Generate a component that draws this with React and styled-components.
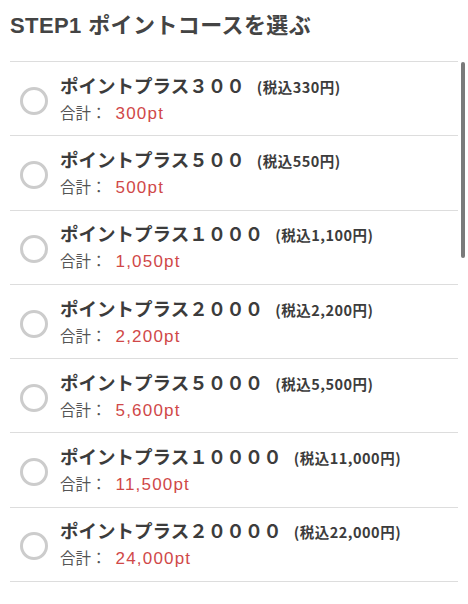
import React from "react";
import styled, { createGlobalStyle } from "styled-components";

const Global = createGlobalStyle`
  html, body { margin: 0; padding: 0; background: #fff; }
  body { font-family: "Liberation Sans", "Noto Sans CJK JP", sans-serif; color: #444; }
`;

const Page = styled.div`
  position: relative;
  width: 468px;
  height: 604px;
  overflow: hidden;
  padding: 0 10px;
  box-sizing: border-box;
`;

const Title = styled.h2`
  margin: 0;
  padding-top: 11px;
  height: 61px;
  box-sizing: border-box;
  font-size: 22px;
  line-height: 30px;
  font-weight: 700;
  color: #444;
  letter-spacing: 0.4px;
`;

const List = styled.ul`
  list-style: none;
  margin: 0;
  padding: 0;
  border-top: 1px solid #ddd;
`;

const Row = styled.li`
  display: flex;
  align-items: center;
  height: 74.3px;
  box-sizing: border-box;
  border-bottom: 1px solid #ddd;
`;

const Radio = styled.span`
  flex: none;
  width: 22px;
  height: 22px;
  border: 3px solid #ccc;
  border-radius: 50%;
  margin: 4px 12px 0 10px;
`;

const Body = styled.div`
  display: flex;
  flex-direction: column;
  padding-top: 3px;
`;

const Name = styled.div`
  font-size: 18.5px;
  line-height: 26px;
  font-weight: 700;
  color: #3c3c3c;
  white-space: nowrap;
`;

const Tax = styled.span`
  font-family: "Noto Sans CJK JP", sans-serif;
  font-size: 14.5px;
  letter-spacing: 0.5px;
  margin-left: 12px;
  font-weight: 700;
`;

const Total = styled.div`
  font-size: 15.5px;
  line-height: 26px;
  margin-top: 1px;
  color: #555;
  white-space: nowrap;
`;

const Pt = styled.span`
  font-size: 17px;
  letter-spacing: 1.2px;
  color: #d04848;
  margin-left: 9px;
`;

const ScrollBar = styled.div`
  position: absolute;
  left: 461px;
  top: 62px;
  width: 4px;
  height: 196px;
  border-radius: 2px;
  background: #7a7a7a;
`;

const courses = [
  ["３００", "330", "300"],
  ["５００", "550", "500"],
  ["１０００", "1,100", "1,050"],
  ["２０００", "2,200", "2,200"],
  ["５０００", "5,500", "5,600"],
  ["１００００", "11,000", "11,500"],
  ["２００００", "22,000", "24,000"],
];

export default function App() {
  return (
    <Page>
      <Global />
      <Title>STEP1 ポイントコースを選ぶ</Title>
      <List>
        {courses.map(([n, tax, pt]) => (
          <Row key={n}>
            <Radio />
            <Body>
              <Name>
                ポイントプラス{n}
                <Tax>(税込{tax}円)</Tax>
              </Name>
              <Total>
                合計：<Pt>{pt}pt</Pt>
              </Total>
            </Body>
          </Row>
        ))}
      </List>
      <ScrollBar />
    </Page>
  );
}
